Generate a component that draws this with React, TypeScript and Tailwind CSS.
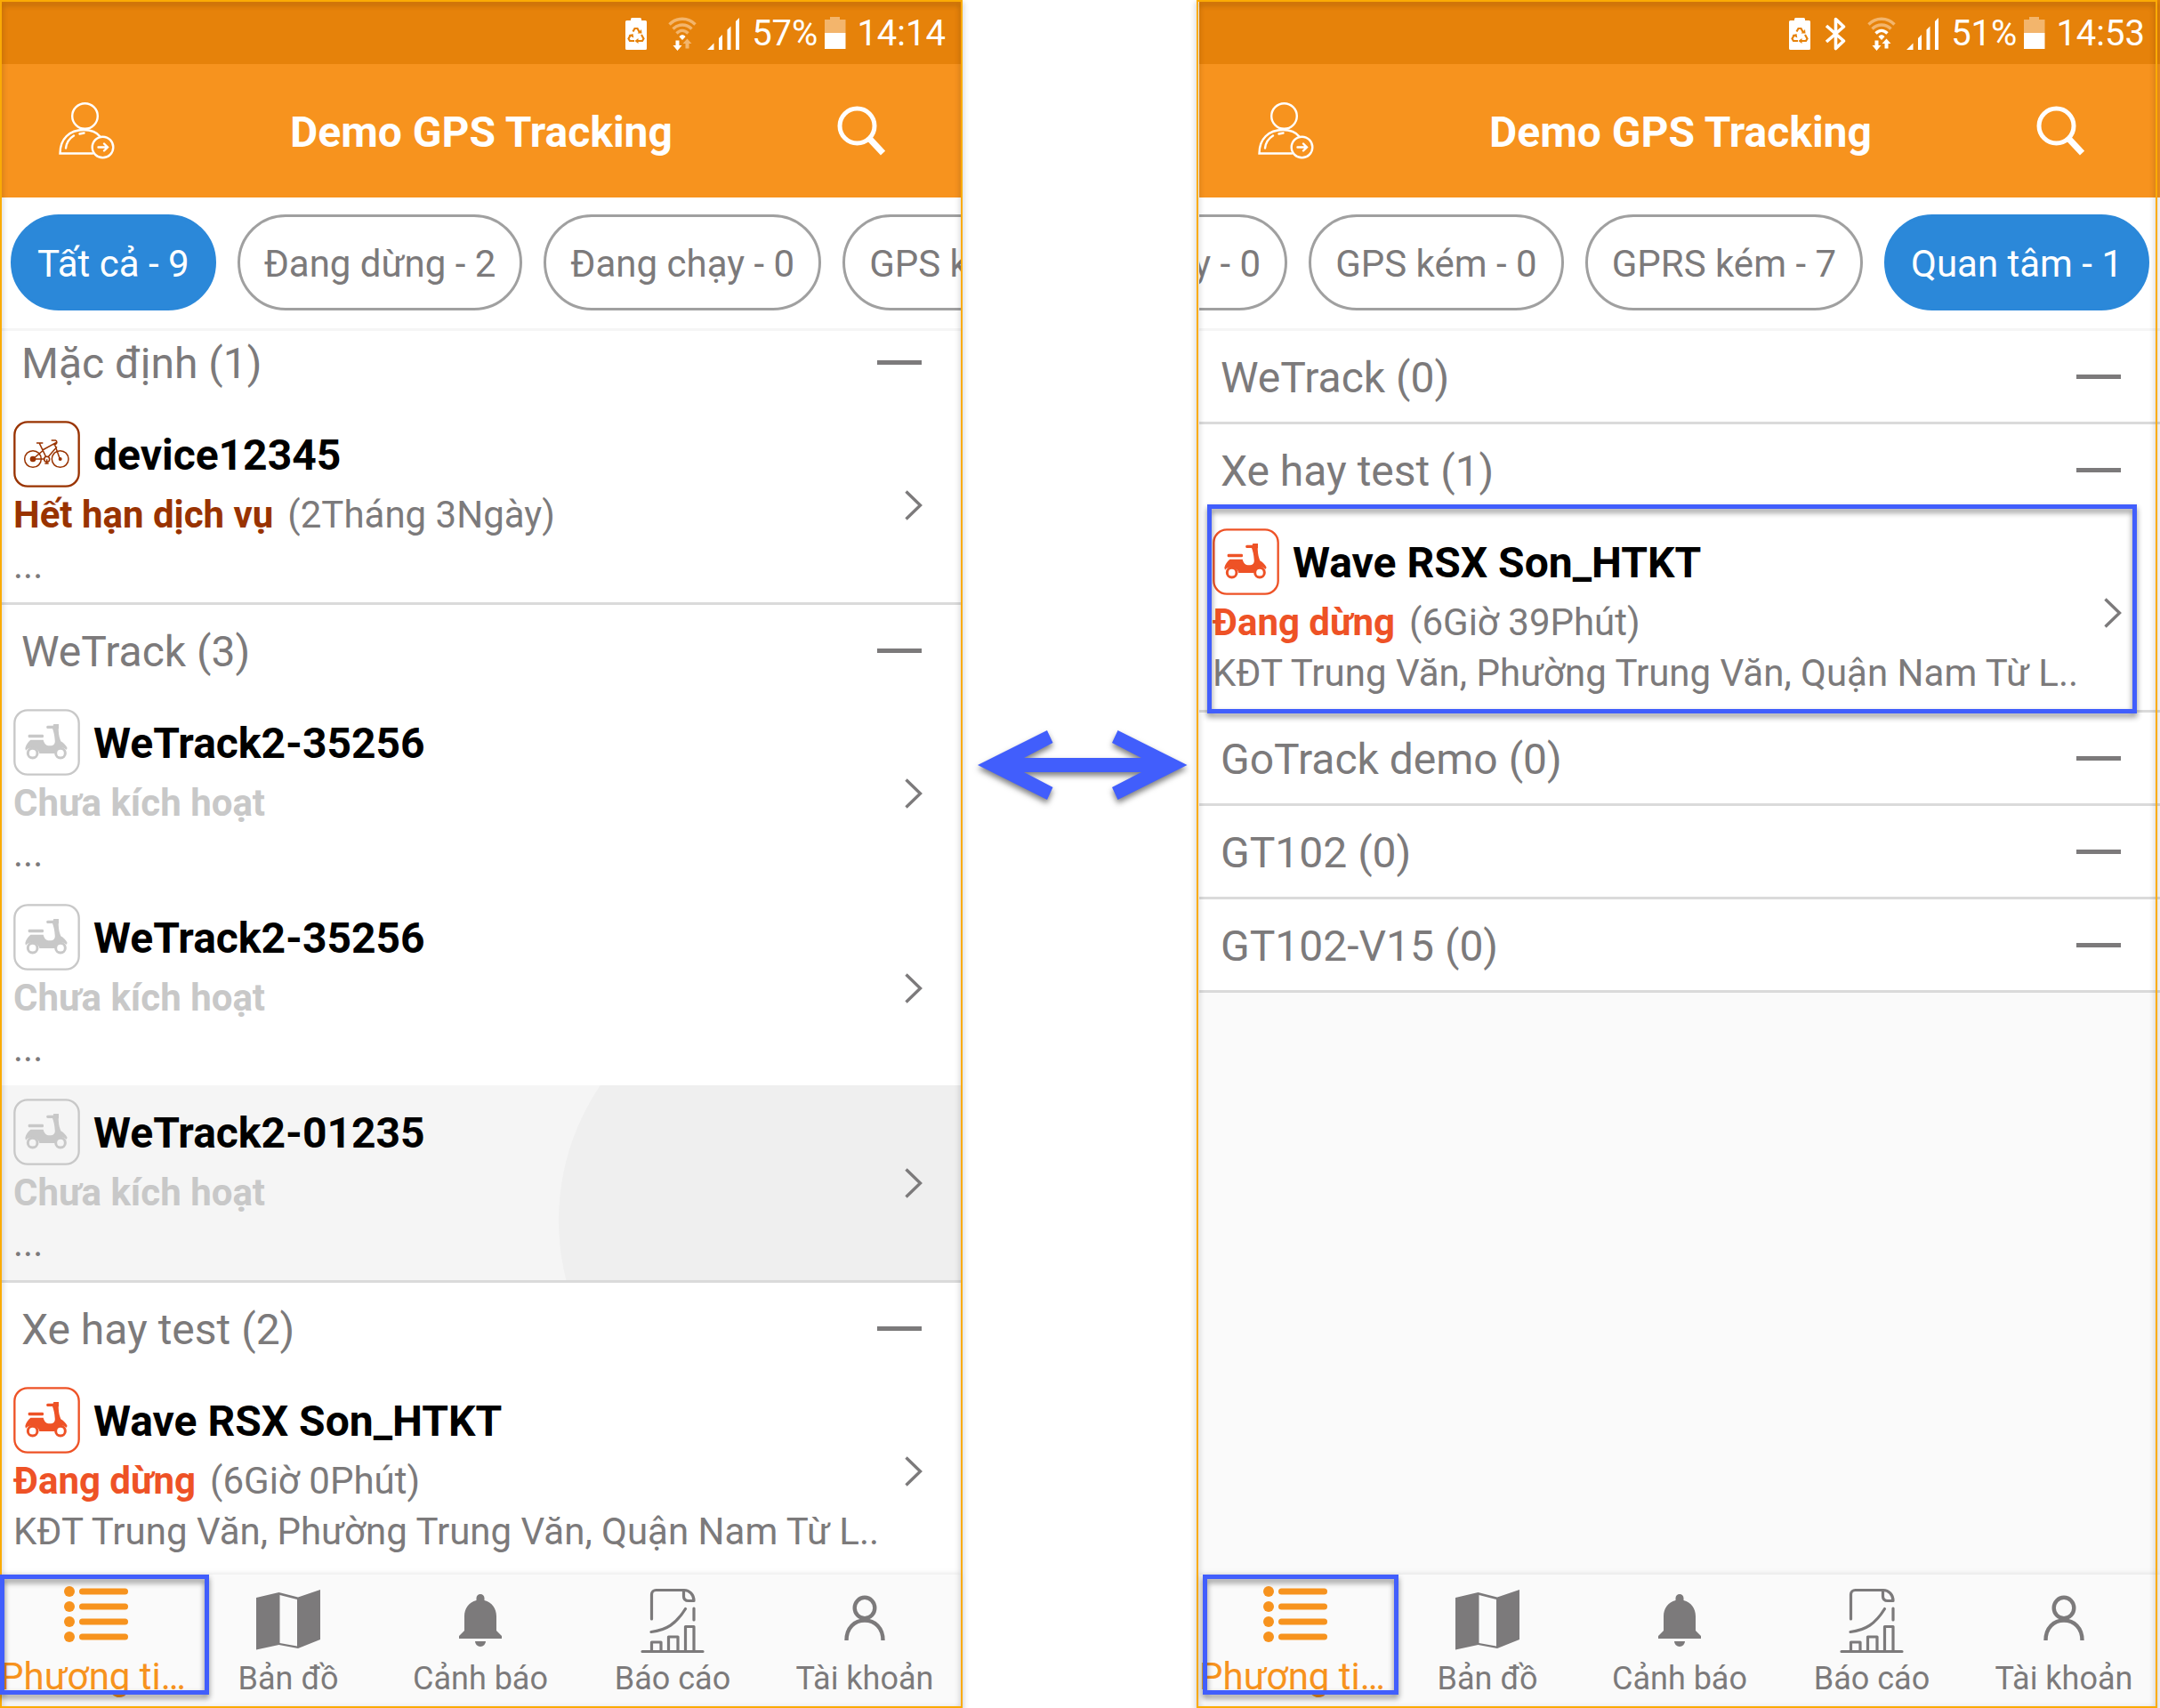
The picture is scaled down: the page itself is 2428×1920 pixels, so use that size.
import React from "react";

type Tone = "expired" | "inactive" | "stopped";
type Device = {
  name: string;
  kind: "bike" | "scooter";
  tone: Tone;
  status: string;
  duration?: string;
  address: string;
  pressed?: boolean;
  marked?: boolean;
};
type Group = { title: string; devices: Device[] };

const toneClass: Record<Tone, string> = {
  expired: "text-[#993300]",
  inactive: "text-[#c8c8c8]",
  stopped: "text-[#ee5226]",
};

const inactive = (name: string, pressed = false): Device => ({
  name,
  kind: "scooter",
  tone: "inactive",
  status: "Chưa kích hoạt",
  address: "...",
  pressed,
});

const wave = (duration: string, marked = false): Device => ({
  name: "Wave RSX Son_HTKT",
  kind: "scooter",
  tone: "stopped",
  status: "Đang dừng",
  duration,
  address: "KĐT Trung Văn, Phường Trung Văn, Quận Nam Từ L..",
  marked,
});

const allGroups: Group[] = [
  {
    title: "Mặc định (1)",
    devices: [
      {
        name: "device12345",
        kind: "bike",
        tone: "expired",
        status: "Hết hạn dịch vụ",
        duration: "(2Tháng 3Ngày)",
        address: "...",
      },
    ],
  },
  {
    title: "WeTrack (3)",
    devices: [inactive("WeTrack2-35256"), inactive("WeTrack2-35256"), inactive("WeTrack2-01235", true)],
  },
  { title: "Xe hay test (2)", devices: [wave("(6Giờ 0Phút)")] },
];

const favouriteGroups: Group[] = [
  { title: "WeTrack (0)", devices: [] },
  { title: "Xe hay test (1)", devices: [wave("(6Giờ 39Phút)", true)] },
  { title: "GoTrack demo (0)", devices: [] },
  { title: "GT102 (0)", devices: [] },
  { title: "GT102-V15 (0)", devices: [] },
];

function EcoBattery() {
  return (
    <svg width="24" height="36" viewBox="0 0 24 36" aria-hidden="true">
      <path d="M6 3V1.5A1.5 1.5 0 0 1 7.500 0h9A1.500 1.500 0 0 1 18 1.500V3h4.500A1.500 1.500 0 0 1 24 4.500v30a1.500 1.500 0 0 1-1.500 1.500h-21A1.500 1.500 0 0 1 0 34.500v-30A1.500 1.500 0 0 1 1.500 3z" fill="#fff" />
      <g fill="none" stroke="#e6820a" strokeWidth="2.200">
        <path d="M8.500 15.500 10.500 12h3l2.500 4.500" />
        <path d="M18 19l2.500 4.500-1.500 2.500h-5.500" />
        <path d="M10 26H5l-1.500-2.500L6 19" />
      </g>
      <path d="M13.500 17.500h5l-.5-4.500zM14.500 23v6l-4-3zM3.500 19.500l5-1.500.8 4.500z" fill="#e6820a" />
    </svg>
  );
}

function Bluetooth() {
  return (
    <svg width="24" height="38" viewBox="0 0 24 38" fill="none" stroke="#fff" strokeWidth="3.600" strokeLinejoin="round" aria-hidden="true">
      <path d="M2 10l19.500 17L12.500 35.500v-33L21.500 11 2 28" />
    </svg>
  );
}

function Wifi({ strong }: { strong: boolean }) {
  return (
    <svg width="32" height="38" viewBox="0 0 32 38" fill="none" strokeWidth="3.400" aria-hidden="true">
      <path d="M1.500 8.500C9.500.2 22.500.2 30.500 8.500" stroke="#f3b56c" />
      <path d="M5.500 13.500c6-6 15-6 21 0" stroke="#f3b56c" />
      <path d="M9.500 18.500c4-4 9-4 13 0" stroke={strong ? "#fff" : "#f3b56c"} />
      <path d="M12.500 22.300c2-2.600 5-2.600 7 0L16 26z" fill="#fff" />
      <path d="M8.500 26.500h4V32h3l-5 6-5-6h3z" fill="#fff" />
      <path d="M19.500 35.500h4V30h3l-5-5.500-5 5.500h3z" fill={strong ? "#fff" : "#f3b56c"} />
    </svg>
  );
}

function Signal() {
  return (
    <svg width="36" height="36" viewBox="0 0 36 36" fill="#fff" aria-hidden="true">
      <path d="M0 36l7.500-7.500V36zM13 23l4-4v17h-4zM22.500 13.500l4-4V36h-4zM32 4l4-4v36h-4z" />
    </svg>
  );
}

function Battery() {
  return (
    <svg width="24" height="37" viewBox="0 0 24 37" aria-hidden="true">
      <path d="M6 3V0h11v3h6.500v15H0V3z" fill="#f3b56c" />
      <path d="M0 18h23.500v18H0z" fill="#fff" />
    </svg>
  );
}

function UserSwitch() {
  return (
    <svg width="63" height="64" viewBox="0 0 63 64" fill="none" stroke="#fff" strokeWidth="2.400" strokeLinecap="round" aria-hidden="true">
      <circle cx="29.500" cy="15.500" r="14.300" />
      <path d="M38 57.500H1.500C1.500 41 12 31 28 31c9 0 15 3 18.500 7.500" />
      <path d="M8 51.500c.8-6.500 4-11 9-14M23.500 35.500l5-1" />
      <circle cx="49.500" cy="50.500" r="11.800" />
      <path d="M44.500 50.500h10.500M51 46.500l4 4-4 4" />
    </svg>
  );
}

function SearchIcon() {
  return (
    <svg width="54" height="56" viewBox="0 0 54 56" fill="none" stroke="#fff" aria-hidden="true">
      <circle cx="22.500" cy="22.500" r="19.500" strokeWidth="5" />
      <path d="M36.500 37l15 16" strokeWidth="7" />
    </svg>
  );
}

function VehicleIcon({ kind }: { kind: "bike" | "scooter" }) {
  return (
    <svg viewBox="0 0 225 225" className="size-[75px] shrink-0" fill="none" stroke="currentColor" aria-hidden="true">
      <rect x="4" y="4" width="217" height="217" rx="44" strokeWidth="7" />
      {kind === "scooter" ? (
        <>
          <g fill="currentColor" stroke="none">
            <rect x="50" y="86" width="52" height="11" rx="4" />
            <path d="M116 56h18l2-5h17v16h-1c1 14 1 24 8 42 10 6 18 14 22 23l-4 6c-10-12-31-12-38 12H88c-4-22-34-26-46-10l-2-8c3-12 9-20 18-28h43c3 13 10 20 22 20 13 0 19-7 17-20-1-15-4-28-8-38h-16c-6 0-6-10 0-10z" />
          </g>
          <circle cx="65" cy="149" r="16" strokeWidth="9" />
          <circle cx="159" cy="149" r="16" strokeWidth="9" />
        </>
      ) : (
        <>
          <g strokeWidth="4.500">
            <circle cx="66" cy="129" r="28" />
            <circle cx="158" cy="129" r="28" />
            <circle cx="113" cy="130" r="9" />
            <path d="M78 75h22M88 76l22 46M66 129l32-27M66 129h40M98 99l47-26M147 88l-30 34M128 66h14c6 2 6 10 1 13l-8 1M140 81l17 48M113 130v15M106 144h13" />
          </g>
          <circle cx="66" cy="129" r="10" fill="currentColor" stroke="none" />
          <circle cx="158" cy="129" r="6" fill="currentColor" stroke="none" />
        </>
      )}
    </svg>
  );
}

function Chevron() {
  return (
    <svg width="20" height="34" viewBox="0 0 20 34" fill="none" stroke="#7c7a7b" strokeWidth="3.400" aria-hidden="true">
      <path d="M1.500 1.500L17.500 17 1.500 32.500" />
    </svg>
  );
}

function ListIcon() {
  return (
    <svg width="72" height="76" viewBox="0 0 72 76" fill="currentColor" aria-hidden="true">
      {[6, 23, 40, 57].map((y) => (
        <g key={y}>
          <circle cx="6" cy={y} r="6" />
          <rect x="17" y={y - 3.5} width="55" height="7" rx="3.500" />
        </g>
      ))}
    </svg>
  );
}

function MapIcon() {
  return (
    <svg width="72" height="76" viewBox="0 0 72 76" fill="currentColor" aria-hidden="true">
      <path fillRule="evenodd" d="M0 13L25.500 7 47 12.500 72 4v56L47 70 25.500 66 0 71.500zM26.500 10v54L46 67.500V15z" />
    </svg>
  );
}

function BellIcon() {
  return (
    <svg width="72" height="76" viewBox="0 0 72 76" fill="currentColor" aria-hidden="true">
      <path d="M31.500 16v-2.500a4.500 4.500 0 0 1 9 0V16C49 18 54 25 54 34v16l6 6v3H12v-3l6-6V34c0-9 5-16 13.500-18zM30 62h12a6 6 0 0 1-12 0z" />
    </svg>
  );
}

function ReportIcon() {
  return (
    <svg width="72" height="76" viewBox="0 0 72 76" fill="none" stroke="currentColor" strokeWidth="3.200" strokeLinecap="round" strokeLinejoin="round" aria-hidden="true">
      <path d="M12.500 37V9.500a5 5 0 0 1 5-5H49c6 0 11 5 11 12h-6c-4 0-5.500-2-5.500-5v-7M60 25v13M12 51.500c17-2 28-9 38.500-26" />
      <path d="M2 73.500h68M12.500 73V63H23v10M31.500 73V57H42v16M50.500 73V45.500H60V73" />
    </svg>
  );
}

function PersonIcon() {
  return (
    <svg width="72" height="76" viewBox="0 0 72 76" fill="none" stroke="currentColor" strokeWidth="4.400" aria-hidden="true">
      <ellipse cx="36" cy="24.500" rx="11.300" ry="11.800" />
      <path d="M15.500 61c0-14 9-22.500 20.500-22.500S56.500 47 56.500 61" />
    </svg>
  );
}

/* Highlight rectangle drawn over part of a screen. */
function Marker({ className }: { className: string }) {
  return (
    <div
      className={`pointer-events-none absolute z-20 border-[5px] border-[#415efc] drop-shadow-[0_4px_3px_rgba(0,0,0,0.45)] ${className}`}
    />
  );
}

function DeviceRow({ device }: { device: Device }) {
  return (
    <div className="relative">
      <button
        type="button"
        className={`relative block w-full overflow-hidden px-[15px] pt-[15px] pb-[13px] text-left ${device.pressed ? "bg-[#f5f5f5]" : ""}`}
      >
        {device.pressed && <span className="absolute -top-[118px] left-[628px] size-[540px] rounded-full bg-[#efefef]" />}
        <span className={`relative flex items-center gap-[15px] ${toneClass[device.tone]}`}>
          <VehicleIcon kind={device.kind} />
          <span className="pt-[3px] text-[48px] leading-[72px] font-bold text-black">{device.name}</span>
        </span>
        <span className="relative mt-0.5 flex gap-4 text-[42px] leading-[57px] whitespace-nowrap">
          <span className={`font-bold ${toneClass[device.tone]}`}>{device.status}</span>
          {device.duration && <span>{device.duration}</span>}
        </span>
        <span className="relative block text-[42px] leading-[57px] whitespace-nowrap">{device.address}</span>
        <span className="absolute inset-y-0 right-[43px] flex items-center">
          <Chevron />
        </span>
      </button>
      {device.marked && <Marker className="-top-3 right-[26px] -bottom-1 left-[9px]" />}
    </div>
  );
}

function GroupSection({ group }: { group: Group }) {
  return (
    <section className="border-b-[3px] border-[#dadada] bg-white">
      <button type="button" className="flex h-[102px] w-full items-center justify-between pr-11 pl-6">
        <span className="pt-[3px] text-[48px] leading-[56px]">{group.title}</span>
        <span className="h-[5px] w-[50px] bg-[#7c7a7b]" />
      </button>
      {group.devices.map((d, i) => (
        <DeviceRow key={i} device={d} />
      ))}
    </section>
  );
}

type ScreenProps = {
  percent: string;
  time: string;
  bluetooth?: boolean;
  chips: string[];
  active: string;
  groups: Group[];
  chipsAtEnd?: boolean;
  scrolled?: boolean;
  frame: string;
  navMarker: string;
};

const tabs = [
  { label: "Bản đồ", icon: <MapIcon /> },
  { label: "Cảnh báo", icon: <BellIcon /> },
  { label: "Báo cáo", icon: <ReportIcon /> },
  { label: "Tài khoản", icon: <PersonIcon /> },
];

function Screen(p: ScreenProps) {
  return (
    <div className="relative flex min-w-0 flex-1 flex-col bg-[#fafafa] text-[#7c7a7b]">
      <div className="flex h-[72px] items-center justify-end bg-[#e6820a] pt-[3px] pr-[17px] text-[40px] leading-[48px] text-white">
        <EcoBattery />
        {p.bluetooth && (
          <span className="ml-4">
            <Bluetooth />
          </span>
        )}
        <span className="ml-6">
          <Wifi strong={!!p.bluetooth} />
        </span>
        <span className="ml-3">
          <Signal />
        </span>
        <span className="ml-[14px]">{p.percent}</span>
        <span className="ml-2">
          <Battery />
        </span>
        <span className="ml-3">{p.time}</span>
      </div>
      <header className="flex h-[150px] items-center justify-between bg-[#f7931e] pr-[85px] pl-[66px]">
        <button type="button" aria-label="Chuyển tài khoản">
          <UserSwitch />
        </button>
        <h1 className="pt-[3px] pl-3 text-[48px] leading-[56px] font-bold text-white">Demo GPS Tracking</h1>
        <button type="button" aria-label="Tìm kiếm">
          <SearchIcon />
        </button>
      </header>
      <div
        className={`flex h-[150px] items-center gap-6 overflow-hidden border-b-[3px] border-[#f5f5f5] bg-white px-3 pb-0.5 ${p.chipsAtEnd ? "justify-end" : ""}`}
      >
        {p.chips.map((c) => (
          <button
            key={c}
            type="button"
            className={`h-[108px] shrink-0 rounded-full border-[3px] px-[27px] pt-1 text-[42px] leading-[48px] whitespace-nowrap ${
              c === p.active ? "border-[#2b88d9] bg-[#2b88d9] text-white" : "border-[#a0a0a0] bg-white"
            }`}
          >
            {c}
          </button>
        ))}
      </div>
      <main className={`flex-1 overflow-hidden ${p.scrolled ? "bg-white" : ""}`}>
        <div className={p.scrolled ? "-mt-4 *:last:border-b-0" : ""}>
          {p.groups.map((g) => (
            <GroupSection key={g.title} group={g} />
          ))}
        </div>
      </main>
      <nav className="relative grid h-[150px] grid-cols-5 bg-[#fafafa] shadow-[0_-1px_6px_rgba(0,0,0,0.1)]">
        <button type="button" className="flex flex-col items-center pt-[13px] text-[#f7931e]">
          <ListIcon />
          <span className="w-full text-left text-[42px] leading-[52px] whitespace-nowrap">Phương ti…</span>
        </button>
        {tabs.map((t) => (
          <button key={t.label} type="button" className="flex flex-col items-center pt-[13px]">
            {t.icon}
            <span className="text-[36px] leading-[56px] whitespace-nowrap">{t.label}</span>
          </button>
        ))}
        <Marker className={`top-0 bottom-[15px] ${p.navMarker}`} />
      </nav>
      <div
        className={`pointer-events-none absolute inset-y-0 z-10 border-2 border-[#fbab05] drop-shadow-[0_3px_3px_rgba(0,0,0,0.4)] ${p.frame}`}
      />
    </div>
  );
}

export default function App() {
  return (
    <div className="flex min-h-screen overflow-hidden bg-white font-[Roboto,sans-serif]">
      <Screen
        percent="57%"
        time="14:14"
        chips={["Tất cả - 9", "Đang dừng - 2", "Đang chạy - 0", "GPS kém - 0"]}
        active="Tất cả - 9"
        groups={allGroups}
        scrolled
        frame="left-0 -right-0.5"
        navMarker="left-0 w-[235px]"
      />
      <div className="flex w-[268px] shrink-0 justify-center pt-[820px] pl-[6px]">
        <svg width="236" height="80" viewBox="0 0 236 80" className="overflow-visible drop-shadow-[0_4px_3px_rgba(0,0,0,0.5)]" aria-hidden="true">
          <path
            d="M0 40L78 1l6.500 14L52 32h132L151 15l6.500-14L235.500 40l-78 39L151 65l33-17H52l32.500 17L78 79z"
            fill="#415efc"
          />
        </svg>
      </div>
      <Screen
        percent="51%"
        time="14:53"
        bluetooth
        chips={["Đang chạy - 0", "GPS kém - 0", "GPRS kém - 7", "Quan tâm - 1"]}
        active="Quan tâm - 1"
        groups={favouriteGroups}
        chipsAtEnd
        frame="-left-[3px] right-[3px]"
        navMarker="left-1 w-[220px]"
      />
    </div>
  );
}
